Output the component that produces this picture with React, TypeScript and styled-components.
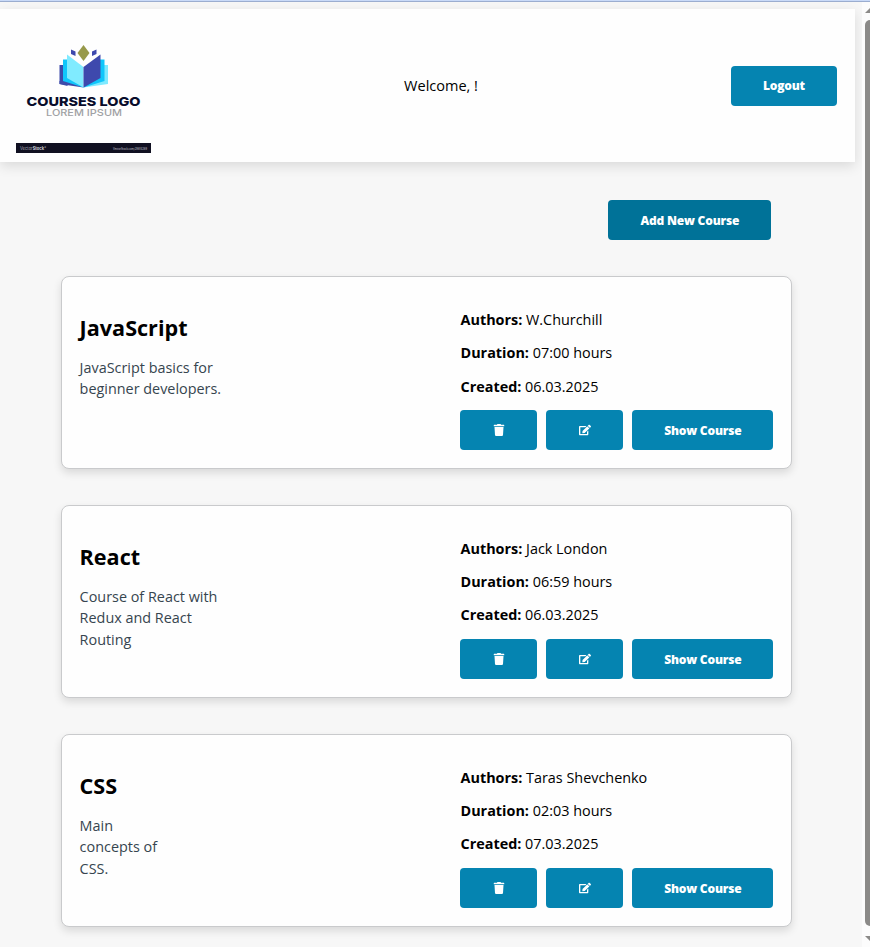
import React from "react";
import styled, { createGlobalStyle } from "styled-components";
import { FaTrash, FaEdit } from "react-icons/fa";

const GlobalStyle = createGlobalStyle`
  * { box-sizing: border-box; }
  body {
    margin: 0;
    overflow: hidden;
    background: #f7f7f7;
    color: #000;
    font: 14.4px/21.6px "Open Sans", sans-serif;
  }
`;

const Window = styled.div`
  display: flex;
  flex-direction: column;
  height: 947px;
  overflow: hidden;
`;

const TopEdge = styled.div`
  flex: none;
  height: 2px;
  background: #c9daf8;
  border-bottom: 1px solid #9badcf;
`;

const Viewport = styled.div`
  display: flex;
  flex: 1;
  min-height: 0;
`;

const Page = styled.div`
  flex: 1;
  overflow: hidden;
  padding-top: 7px;
`;

const Header = styled.header`
  display: flex;
  align-items: center;
  justify-content: space-between;
  width: 855px;
  height: 153px;
  padding: 0 18px 0 16px;
  background: #fefefe;
  box-shadow: 0 4px 12px rgba(0, 0, 0, 0.12);
`;

const Logo = styled.svg`
  display: block;
  width: 135px;
  height: 135px;
`;

const Welcome = styled.span`
  font-size: 14.5px;
`;

const Button = styled.button<{ $width: number; $dark?: boolean }>`
  display: flex;
  align-items: center;
  justify-content: center;
  width: ${(p) => p.$width}px;
  height: 40px;
  padding: 0;
  border: 0;
  border-radius: 4px;
  background: ${(p) => (p.$dark ? "#007298" : "#0584b1")};
  color: #fff;
  font: 800 12px/18px "Open Sans", sans-serif;
  letter-spacing: -0.2px;
`;

const ButtonLabel = styled.span`
  padding: 1.2px 0 0 0.6px;
`;

const Toolbar = styled.div`
  display: flex;
  justify-content: flex-end;
  width: 771px;
  padding: 38px 0 36.4px;
`;

const CourseList = styled.main`
  display: flex;
  flex-direction: column;
  gap: 36px;
  width: 731px;
  margin-left: 61px;
`;

const Card = styled.article`
  display: flex;
  justify-content: space-between;
  height: 192.85px;
  padding: 18px;
  border: 1px solid #c9cacc;
  border-radius: 8px;
  background: #fefefe;
  box-shadow: 0 4px 8px rgba(0, 0, 0, 0.12);
`;

const Summary = styled.section`
  padding-top: 14.6px;
  margin-left: -0.4px;
`;

const Title = styled.h2`
  margin: 0 0 10.9px;
  font-size: 21.6px;
  font-weight: 700;
  line-height: 36px;
`;

const Description = styled.p<{ $width: number }>`
  width: ${(p) => p.$width}px;
  margin: 0;
  color: #36454f;
  font-size: 14.4px;
  line-height: 21.5px;
`;

const Details = styled.section`
  display: flex;
  flex-direction: column;
  justify-content: space-between;
  width: 313px;
`;

const Facts = styled.div`
  padding: 7.7px 0 0 0.5px;
`;

const Fact = styled.p`
  margin: 0;
  font-size: 14.4px;
  line-height: 33.25px;
`;

const Actions = styled.div`
  display: flex;
  gap: 9px;
`;

const ScrollTrack = styled.div`
  display: flex;
  flex-direction: column;
  align-items: flex-end;
  width: 8px;
  background: #fcfcfc;
`;

const ScrollThumb = styled.div`
  width: 5px;
  height: 906px;
  margin: 6px 0 9px;
  border-radius: 5px 0 0 5px;
  background: #8b8a88;
`;

const ScrollArrow = styled.svg`
  display: block;
  width: 5px;
  height: 12px;
`;

const courses = [
  { title: "JavaScript", text: "JavaScript basics for beginner developers.", width: 150, author: "W.Churchill", duration: "07:00", created: "06.03.2025" },
  { title: "React", text: "Course of React with Redux and React Routing", width: 145, author: "Jack London", duration: "06:59", created: "06.03.2025" },
  { title: "CSS", text: "Main concepts of CSS.", width: 85, author: "Taras Shevchenko", duration: "02:03", created: "07.03.2025" },
];

function CoursesLogo() {
  return (
    <Logo viewBox="0 0 135 135" aria-label="Courses logo">
      <path d="M43.500 47h8V68l-8-2Z" fill="#3d4baa" />
      <path d="M43.500 66 67.500 69.500 52 62l-8.500 1Z" fill="#3d4baa" />
      <path d="M92 47h-8L67.500 69.500 92 66Z" fill="#7feaff" />
      <path d="M47 41.500h6l14.500 28L47 63Z M88.500 41.500h-6L67.500 69.500l21-6.500Z" fill="#10c6fb" />
      <path d="M51 36.500 67.500 49v20.500L51 60Z" fill="#80ebff" />
      <path d="M84.500 36.500 67.500 49v20.500l17-9.500Z" fill="#3e49ad" />
      <path d="m67.500 27 6 8-6 8-6-8Z" fill="#97994a" />
      <path d="m55 31.500 4.500 2v4.500L55 36Z M80.500 31.500 76 33.500v4.500l4.500-2Z" fill="#3e49ad" />
      <text x="67.500" y="88" textAnchor="middle" textLength="114" lengthAdjust="spacingAndGlyphs" fontFamily="Inter, sans-serif" fontWeight="800" fontSize="12.300" fill="#080c2b">COURSES LOGO</text>
      <text x="68" y="98" textAnchor="middle" textLength="76" lengthAdjust="spacingAndGlyphs" fontFamily="Inter, sans-serif" fontWeight="500" fontSize="9.200" fill="#a0a1a4">LOREM IPSUM</text>
      <rect y="125" width="135" height="10" fill="#101021" />
      <text x="4" y="131.500" textLength="26" lengthAdjust="spacingAndGlyphs" fontFamily="Inter, sans-serif" fontSize="4.600" fill="#a7a7b2">Vector<tspan fontWeight="700" fill="#d0d0d8">Stock</tspan>°</text>
      <text x="97" y="131.500" textLength="34" lengthAdjust="spacingAndGlyphs" fontFamily="Inter, sans-serif" fontSize="3" fill="#c7c7d2">VectorStock.com/29814289</text>
    </Logo>
  );
}

export default function App() {
  return (
    <>
      <GlobalStyle />
      <Window>
        <TopEdge />
        <Viewport>
          <Page>
            <Header>
              <CoursesLogo />
              <Welcome>Welcome, !</Welcome>
              <Button $width={106}>Logout</Button>
            </Header>
            <Toolbar>
              <Button $width={163} $dark><ButtonLabel>Add New Course</ButtonLabel></Button>
            </Toolbar>
            <CourseList>
              {courses.map((c) => (
                <Card key={c.title}>
                  <Summary>
                    <Title>{c.title}</Title>
                    <Description $width={c.width}>{c.text}</Description>
                  </Summary>
                  <Details>
                    <Facts>
                      <Fact><b>Authors:</b> {c.author}</Fact>
                      <Fact><b>Duration:</b> {c.duration} hours</Fact>
                      <Fact><b>Created:</b> {c.created}</Fact>
                    </Facts>
                    <Actions>
                      <Button $width={77} aria-label="Delete"><FaTrash size={12} /></Button>
                      <Button $width={77} aria-label="Edit"><FaEdit size={12} /></Button>
                      <Button $width={141}><ButtonLabel>Show Course</ButtonLabel></Button>
                    </Actions>
                  </Details>
                </Card>
              ))}
            </CourseList>
          </Page>
          <ScrollTrack>
            <ScrollArrow viewBox="0 0 5 12"><path d="M0 11 5 6v5Z" fill="#8b8a88" /></ScrollArrow>
            <ScrollThumb />
            <ScrollArrow viewBox="0 0 5 12"><path d="M0 1 5 6V1Z" fill="#8b8a88" /></ScrollArrow>
          </ScrollTrack>
        </Viewport>
      </Window>
    </>
  );
}
